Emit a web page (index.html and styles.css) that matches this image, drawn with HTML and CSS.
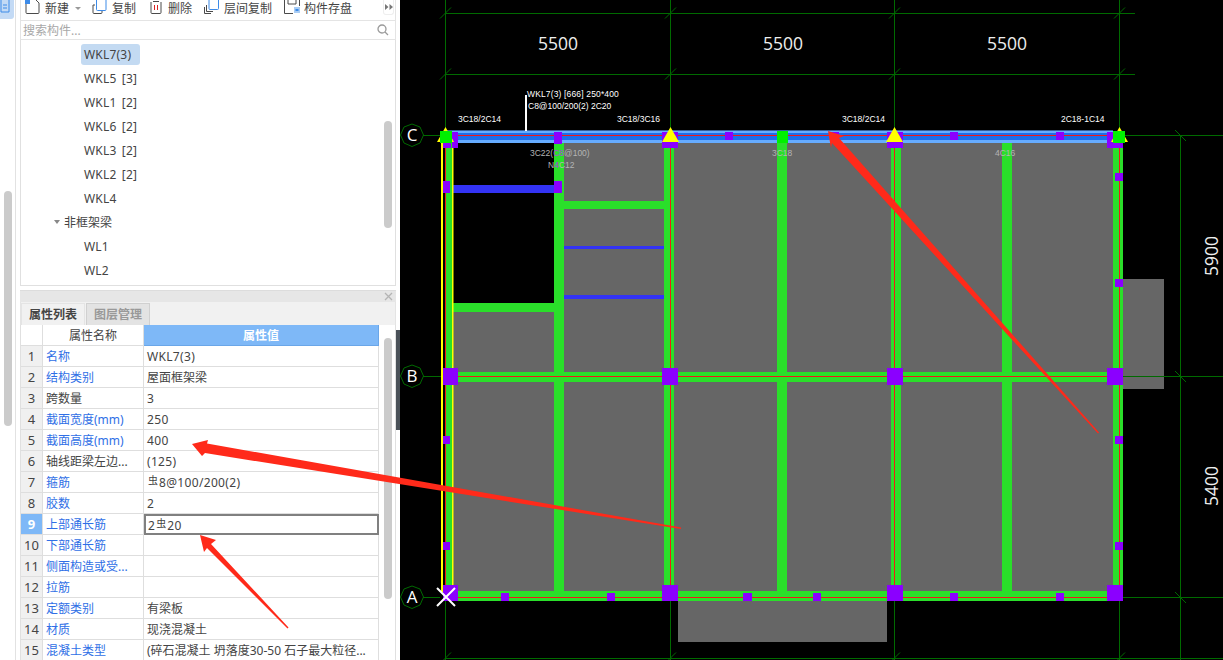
FILE: index.html
```html
<!DOCTYPE html>
<html lang="zh-CN">
<head>
<meta charset="utf-8">
<title>构件属性</title>
<link rel="stylesheet" href="styles.css">
</head>
<body>
<div class="app">
  <aside class="rail">
    <div class="rail-btn"><svg width="14" height="19" viewBox="0 0 14 19"><path class="ic-blue" d="M1 0V12H9V0M3 5H7M3 8H7"/></svg></div>
    <div class="rail-scroll"></div>
  </aside>
  <section class="side">
    <div class="tools">
      <div class="tool tool-first">
        <svg class="ic15" viewBox="0 0 15 14"><path class="ic-dark" d="M1 3V12.500Q1 13.500 2 13.500H13Q14 13.500 14 12.500V3L11 0"/><rect class="ic-fill" x="0" y="0" width="5" height="4"/></svg>
        <span>新建</span><i class="caret"></i>
      </div>
      <div class="tool">
        <svg class="ic15" viewBox="0 0 15 14"><path class="ic-dark" d="M3 5H1V12.500Q1 13.500 2 13.500H9Q10 13.500 10 12.500V11"/><path class="ic-blue" d="M4.500 0V9.500Q4.500 10.500 5.500 10.500H13Q14 10.500 14 9.500V0"/></svg>
        <span>复制</span>
      </div>
      <div class="tool tool-narrow">
        <svg class="ic16" viewBox="0 0 16 14"><path class="ic-dark" d="M3 2V12.500Q3 13.500 4 13.500H12Q13 13.500 13 12.500V2M5 1.500H11"/><path class="ic-red" d="M6.500 5V10M9.500 5V10"/></svg>
        <span>删除</span>
      </div>
      <div class="tool">
        <svg class="ic15" viewBox="0 0 15 14"><path class="ic-dark" d="M.5 7V13.500H7M2.500 5V11.500H9"/><path class="ic-blue" d="M5 0V8.500Q5 9.500 6 9.500H13.500Q14.500 9.500 14.500 8.500V0"/></svg>
        <span>层间复制</span>
      </div>
      <div class="tool tool-narrow">
        <svg class="ic16" viewBox="0 0 16 14"><path class="ic-dark" d="M.5 0V13.500H9M15.500 0V6M4 0V4H12V0"/><rect class="ic-soft" x="10" y="7" width="6" height="6"/><rect class="ic-fill" x="11.500" y="9" width="3" height="2"/></svg>
        <span>构件存盘</span>
      </div>
      <div class="more"><svg width="8" height="6" viewBox="0 0 8 6"><path class="ic-gray" d="M0 0L3.500 3L0 6ZM4.500 0L8 3L4.500 6Z"/></svg></div>
    </div>
    <div class="search">
      <span>搜索构件...</span>
      <svg width="12" height="12" viewBox="0 0 12 12"><circle class="ic-gray-line" cx="5" cy="5" r="4"/><path class="ic-gray-line" d="M8 8L11 11"/></svg>
    </div>
    <div class="tree">
      <div class="tree-list">
        <div class="leaf"><span class="selected">WKL7(3)</span></div>
        <div class="leaf"><span>WKL5 [3]</span></div>
        <div class="leaf"><span>WKL1 [2]</span></div>
        <div class="leaf"><span>WKL6 [2]</span></div>
        <div class="leaf"><span>WKL3 [2]</span></div>
        <div class="leaf"><span>WKL2 [2]</span></div>
        <div class="leaf"><span>WKL4</span></div>
        <div class="group"><i class="tri"></i><span>非框架梁</span></div>
        <div class="leaf"><span>WL1</span></div>
        <div class="leaf"><span>WL2</span></div>
      </div>
      <div class="tree-track"><div class="tree-thumb"></div></div>
    </div>
    <div class="spacer"></div>
    <div class="closebar"><svg width="9" height="9" viewBox="0 0 9 9"><path class="ic-close" d="M1 1L8 8M8 1L1 8"/></svg></div>
    <div class="tabs">
      <div class="tab active">属性列表</div>
      <div class="tab">图层管理</div>
    </div>
    <div class="props">
      <div class="grid">
        <div class="row head"><div class="num"></div><div class="name">属性名称</div><div class="val">属性值</div></div>
        <div class="row"><div class="num">1</div><div class="name link">名称</div><div class="val lat">WKL7(3)</div></div>
        <div class="row"><div class="num">2</div><div class="name link">结构类别</div><div class="val">屋面框架梁</div></div>
        <div class="row"><div class="num">3</div><div class="name">跨数量</div><div class="val lat">3</div></div>
        <div class="row"><div class="num">4</div><div class="name link">截面宽度(mm)</div><div class="val lat">250</div></div>
        <div class="row"><div class="num">5</div><div class="name link">截面高度(mm)</div><div class="val lat">400</div></div>
        <div class="row"><div class="num">6</div><div class="name">轴线距梁左边...</div><div class="val lat">(125)</div></div>
        <div class="row"><div class="num">7</div><div class="name link">箍筋</div><div class="val lat"><span class="rebar">虫</span>8@100/200(2)</div></div>
        <div class="row"><div class="num">8</div><div class="name link">胶数</div><div class="val lat">2</div></div>
        <div class="row current"><div class="num">9</div><div class="name link">上部通长筋</div><div class="val lat">2<span class="rebar">虫</span>20</div></div>
        <div class="row"><div class="num">10</div><div class="name link">下部通长筋</div><div class="val"></div></div>
        <div class="row"><div class="num">11</div><div class="name link">侧面构造或受...</div><div class="val"></div></div>
        <div class="row"><div class="num">12</div><div class="name link">拉筋</div><div class="val"></div></div>
        <div class="row"><div class="num">13</div><div class="name link">定额类别</div><div class="val">有梁板</div></div>
        <div class="row"><div class="num">14</div><div class="name link">材质</div><div class="val">现浇混凝土</div></div>
        <div class="row"><div class="num">15</div><div class="name link">混凝土类型</div><div class="val">(碎石混凝土 坍落度30-50 石子最大粒径...</div></div>
      </div>
      <div class="props-track"><div class="props-thumb"></div></div>
    </div>
  </section>
  <div class="gutter"><div class="handle"></div></div>
  <svg class="plan" width="823" height="660" viewBox="400 0 823 660">
    <rect class="bg" x="400" y="0" width="823" height="660"/>

    <g class="dim">
      <path d="M445.500 0V660M670.500 0V660M894.500 0V660M1119.500 0V660"/>
      <path d="M445 13.500H1135M445 74.500H1135M445 658.500H1223M1180.500 135V660"/>
      <path d="M440 18.500L451 7.500M665 18.500L676 7.500M889 18.500L900 7.500M1114 18.500L1125 7.500"/>
      <path d="M440 79.500L451 68.500M665 79.500L676 68.500M889 79.500L900 68.500M1114 79.500L1125 68.500"/>
      <path d="M440 663.500L451 652.500M665 663.500L676 652.500M889 663.500L900 652.500M1114 663.500L1125 652.500"/>
    </g>

    <g class="slab">
      <rect x="452" y="142" width="661" height="450"/>
      <rect x="1123" y="279" width="41" height="110"/>
      <rect x="678" y="600" width="209" height="42"/>
    </g>
    <rect class="bg" x="453" y="142" width="102" height="161"/>

    <g class="dim">
      <path d="M423 135.500H440M1125 135.500H1223M423 376.500H443M1123 376.500H1223M423 597.500H440M1123 597.500H1223"/>
      <path d="M1175 130L1186 141M1175 371L1186 382M1175 592L1186 603"/>
    </g>

    <g class="beam">
      <rect x="446" y="142" width="6" height="459"/>
      <rect x="554" y="142" width="10" height="450"/>
      <rect x="664" y="142" width="10" height="450"/>
      <rect x="777" y="142" width="10" height="450"/>
      <rect x="891" y="142" width="10" height="450"/>
      <rect x="1002" y="142" width="10" height="450"/>
      <rect x="1113" y="142" width="10" height="459"/>
      <rect x="452" y="372" width="661" height="10"/>
      <rect x="452" y="591" width="661" height="10"/>
      <rect x="453" y="303" width="101" height="9"/>
      <rect x="564" y="201" width="100" height="8"/>
    </g>
    <g class="blue">
      <rect x="453" y="185" width="101" height="8"/>
      <rect x="564" y="246" width="100" height="3"/>
      <rect x="564" y="295" width="100" height="4"/>
    </g>
    <rect class="yellow" x="441" y="142" width="2" height="450"/>
    <rect class="yellow" x="452" y="142" width="1.500" height="450"/>

    <rect class="top-edge" x="445" y="130" width="668" height="1"/>
    <rect class="top-light" x="445" y="131" width="668" height="12"/>
    <rect class="top-core" x="445" y="133" width="668" height="7"/>

    <g class="red">
      <path d="M445 135.500H1119M445 376.500H1119M445 597.500H1119"/>
      <path d="M445.500 142V597M670.500 142V597M894.500 142V597M1119.500 142V597"/>
    </g>

    <g class="purple">
      <rect x="443" y="142" width="8" height="6"/>
      <rect x="452" y="132" width="6" height="16"/>
      <rect x="554" y="132" width="8" height="12"/>
      <rect x="662" y="132" width="16" height="16"/>
      <rect x="725" y="132" width="8" height="8"/>
      <rect x="830" y="132" width="9" height="8"/>
      <rect x="887" y="132" width="16" height="16"/>
      <rect x="950" y="132" width="8" height="8"/>
      <rect x="1056" y="132" width="8" height="8"/>
      <rect x="1107" y="132" width="16" height="16"/>
      <rect x="443" y="181" width="7" height="12"/>
      <rect x="554" y="181" width="8" height="12"/>
      <rect x="1115" y="173" width="8" height="8"/>
      <rect x="1115" y="279" width="8" height="8"/>
      <rect x="443" y="368" width="15" height="17"/>
      <rect x="662" y="368" width="16" height="17"/>
      <rect x="887" y="368" width="16" height="17"/>
      <rect x="1107" y="368" width="16" height="17"/>
      <rect x="443" y="436" width="7" height="8"/>
      <rect x="1115" y="436" width="8" height="8"/>
      <rect x="443" y="542" width="7" height="8"/>
      <rect x="1115" y="542" width="8" height="8"/>
      <rect x="443" y="585" width="15" height="16"/>
      <rect x="501" y="593" width="8" height="8"/>
      <rect x="607" y="593" width="8" height="8"/>
      <rect x="662" y="585" width="16" height="16"/>
      <rect x="743" y="593" width="9" height="8"/>
      <rect x="813" y="593" width="8" height="8"/>
      <rect x="887" y="585" width="16" height="16"/>
      <rect x="950" y="593" width="8" height="8"/>
      <rect x="1056" y="593" width="8" height="8"/>
      <rect x="1107" y="585" width="16" height="16"/>
    </g>

    <g class="yellow">
      <polygon points="445.500,127 454,142 437,142"/>
      <polygon points="670.500,127 679,142 662,142"/>
      <polygon points="894.500,127 903,142 886,142"/>
      <polygon points="1119.500,127 1128,142 1111,142"/>
    </g>
    <g class="lime">
      <rect x="440" y="131" width="12" height="12"/>
      <rect x="777" y="131" width="11" height="12"/>
      <rect x="1113" y="131" width="12" height="12"/>
    </g>

    <g class="axis">
      <polygon points="412,124 420,127 423.500,135 420,143 412,146.500 404,143 400.500,135 404,127"/>
      <polygon points="412,365 420,368 423.500,376 420,384 412,387.500 404,384 400.500,376 404,368"/>
      <polygon points="412,586 420,589 423.500,597 420,605 412,608.500 404,605 400.500,597 404,589"/>
    </g>
    <g class="axis-text">
      <text x="412" y="141">C</text>
      <text x="412" y="382">B</text>
      <text x="412" y="603">A</text>
    </g>
    <path class="cross" d="M437 588L455 606M455 588L437 606"/>
    <rect class="leader" x="525" y="95" width="2" height="36"/>

    <g class="dim-text">
      <text x="558" y="50">5500</text>
      <text x="783" y="50">5500</text>
      <text x="1007" y="50">5500</text>
      <text transform="translate(1218 256) rotate(-90)">5900</text>
      <text transform="translate(1218 486) rotate(-90)">5400</text>
    </g>
    <g class="note">
      <text class="wide" x="527" y="97">WKL7(3) [666] 250*400</text>
      <text x="528" y="109">C8@100/200(2) 2C20</text>
      <text x="458" y="122">3C18/2C14</text>
      <text x="617" y="122">3C18/3C16</text>
      <text x="842" y="122">3C18/2C14</text>
      <text x="1061" y="122">2C18-1C14</text>
    </g>
    <g class="note dimmed">
      <text x="530" y="156">3C22(<tspan class="violet">C8</tspan>@100)</text>
      <text x="548" y="168">N<tspan class="violet">4</tspan>C12</text>
      <text x="772" y="156">3C18</text>
      <text x="995" y="156">4C16</text>
    </g>
  </svg>
  <svg class="marks" width="1223" height="660" viewBox="0 0 1223 660">
    <polygon points="192,444 208,440 207,443.500 681,527.500 681,529 205,453 202,456"/>
    <polygon points="200,535 216,540 211,544 288.500,627.500 287.500,628.500 207,548 204,552"/>
    <polygon points="828,131 844,136 839,138 1099,432.500 1098,433.500 832,143 831,148"/>
  </svg>
</div>
</body>
</html>
```
FILE: styles.css
```css
* { box-sizing: border-box; }
html, body { margin: 0; padding: 0; background: #fff; }
body { font-family: "Noto Sans", "Noto Sans CJK SC", sans-serif; font-size: 12px; color: #444; }
.app { position: relative; display: flex; width: 1223px; height: 660px; overflow: hidden; background: #fff; }

.rail { flex: none; width: 16px; margin-right: 4px; border-right: 1px solid #e2e2e2; }
.rail-btn { width: 14px; height: 19px; background: #c3daf5; border-radius: 0 0 3px 0; }
.rail-scroll { width: 8px; height: 235px; margin: 172px 0 0 4px; background: #cbcbcb; border-radius: 4px; }

.side { flex: none; width: 376px; display: flex; flex-direction: column; height: 660px; }
.tools { display: flex; align-items: flex-start; gap: 12px; height: 21px; padding-left: 4px; border: 1px solid #e4e4e4; border-width: 0 1px 1px 1px; }
.tool { display: flex; align-items: flex-start; gap: 5px; height: 20px; line-height: 18px; }
.tool-first { margin-right: -1px; }
.tool-narrow { gap: 4px; }
.tool svg { flex: none; display: block; }
.ic15 { width: 15px; height: 14px; }
.ic16 { width: 16px; height: 14px; }
.ic-dark, .ic-blue, .ic-red, .ic-gray-line, .ic-close { fill: none; stroke-width: 1; }
.ic-dark { stroke: #4a4a4a; }
.ic-blue { stroke: #3d8be8; }
.ic-red { stroke: #d22; }
.ic-gray-line { stroke: #9a9a9a; stroke-width: 1.300; }
.ic-close { stroke: #b4b4b4; stroke-width: 1.300; }
.ic-fill { fill: #3d8be8; }
.ic-soft { fill: #a9cdf5; }
.ic-gray { fill: #777; }
.caret { width: 0; height: 0; margin: 7px 0 0 1px; border: 3px solid transparent; border-top: 3px solid #999; border-bottom: 0; }
.more { display: flex; align-items: center; justify-content: center; width: 11px; height: 15px; margin-left: auto; margin-right: 1px; border: 1px solid #eee; border-top: 0; border-radius: 0 0 3px 3px; }

.search { display: flex; align-items: center; justify-content: space-between; height: 19px; padding: 0 6px 0 2px; border: 1px solid #e4e4e4; border-width: 0 1px 1px 1px; color: #a8a8a8; }

.tree { display: flex; flex: none; height: 246px; border: 1px solid #e0e0e0; border-width: 0 1px 1px 1px; overflow: hidden; }
.tree-list { flex: 1; padding-top: 2px; }
.leaf, .group { display: flex; align-items: center; height: 24px; }
.leaf { padding-left: 60px; }
.leaf span { padding: 0 3px; line-height: 21px; height: 21px; white-space: pre; letter-spacing: .2px; word-spacing: 2px; }
.selected { width: 59px; background: #c3daf2; border-radius: 3px; }
.group { padding-left: 33px; gap: 4px; }
.tri { width: 0; height: 0; border: 3px solid transparent; border-top: 4px solid #888; border-bottom: 0; }
.tree-track { flex: none; width: 11px; }
.tree-thumb { width: 8px; height: 107px; margin-top: 81px; background: #cbcbcb; border-radius: 4px; }

.spacer { flex: none; height: 4px; }
.closebar { display: flex; align-items: center; justify-content: flex-end; flex: none; height: 12px; padding-right: 3px; background: #e6e6e6; border-top: 1px solid #dcdcdc; }
.tabs { display: flex; flex: none; align-items: flex-end; gap: 1px; height: 23px; background: #f1f1f1; border: 1px solid #e4e4e4; border-width: 0 1px 0 1px; }
.tab { width: 64px; height: 22px; line-height: 21px; text-align: center; font-weight: 700; color: #999; background: #e3e3e3; border: 1px solid #d0d0d0; border-bottom: 0; }
.tab.active { color: #444; background: #f1f1f1; border-color: #e4e4e4; }

.props { display: flex; flex: 1; min-height: 0; border: 1px solid #e0e0e0; border-width: 0 1px; }
.grid { flex: none; width: 358px; }
.row { display: grid; grid-template-columns: 22px 101px 235px; height: 21px; line-height: 21px; }
.row > div { border: 1px solid #dedede; border-width: 0 1px 1px 0; white-space: nowrap; overflow: hidden; }
.num { text-align: center; background: #f0f0f0; font-size: 13px; }
.name { padding-left: 3px; }
.val { padding-left: 3px; }
.lat { letter-spacing: .33px; }
.link { color: #2f6fe6; }
.head .num { background: #fff; }
.head .name { text-align: center; padding-left: 0; }
.head .val { text-align: center; background: #7eb8f7; color: #fff; font-weight: 700; padding-left: 0; border-color: #6aa6e8; }
.current .num { background: #7eb8f7; color: #fff; font-weight: 700; }
.row.current > .val { border: 2px solid #808080; line-height: 19px; padding-left: 2px; }
.rebar { display: inline-block; font-size: 10px; line-height: 10px; vertical-align: 3px; margin: 0 1px 0 1px; letter-spacing: 0; }
.props-track { flex: none; width: 16px; padding-left: 5px; }
.props-thumb { width: 8px; height: 261px; margin-top: 13px; background: #cbcbcb; border-radius: 4px; }

.gutter { flex: none; width: 4px; }
.handle { height: 100px; margin-top: 330px; background: #4b5259; }

.plan { flex: none; display: block; }
.marks { position: absolute; left: 0; top: 0; pointer-events: none; }
.marks polygon { fill: #ff2a1a; }

.bg { fill: #000; }
.slab rect { fill: #666; }
.beam rect { fill: #2adf2a; }
.blue rect { fill: #3333f5; }
.yellow { fill: #ffff00; }
.lime rect { fill: #00f000; }
.purple rect { fill: #8b00ff; }
.dim path { fill: none; stroke: #006a00; stroke-width: 1; }
.red path { fill: none; stroke: #f01818; stroke-width: 1; }
.top-edge { fill: #35609c; }
.top-light { fill: #66acff; }
.top-core { fill: #1e6fea; }
.axis polygon { fill: none; stroke: #006a00; stroke-width: 1; }
.axis-text text { fill: #fff; font-family: "Open Sans", sans-serif; font-size: 17px; text-anchor: middle; }
.cross { fill: none; stroke: #fff; stroke-width: 2; }
.leader { fill: #fff; }
.dim-text text { fill: #eee; font-family: "Open Sans", sans-serif; font-size: 17.500px; text-anchor: middle; }
.note text { fill: #fff; font-family: "Liberation Sans", sans-serif; font-size: 8.500px; }
.note text.wide { letter-spacing: .15px; }
.note.dimmed text { fill: #b4b4b4; }
.note .violet { fill: #b040e0; }
```
